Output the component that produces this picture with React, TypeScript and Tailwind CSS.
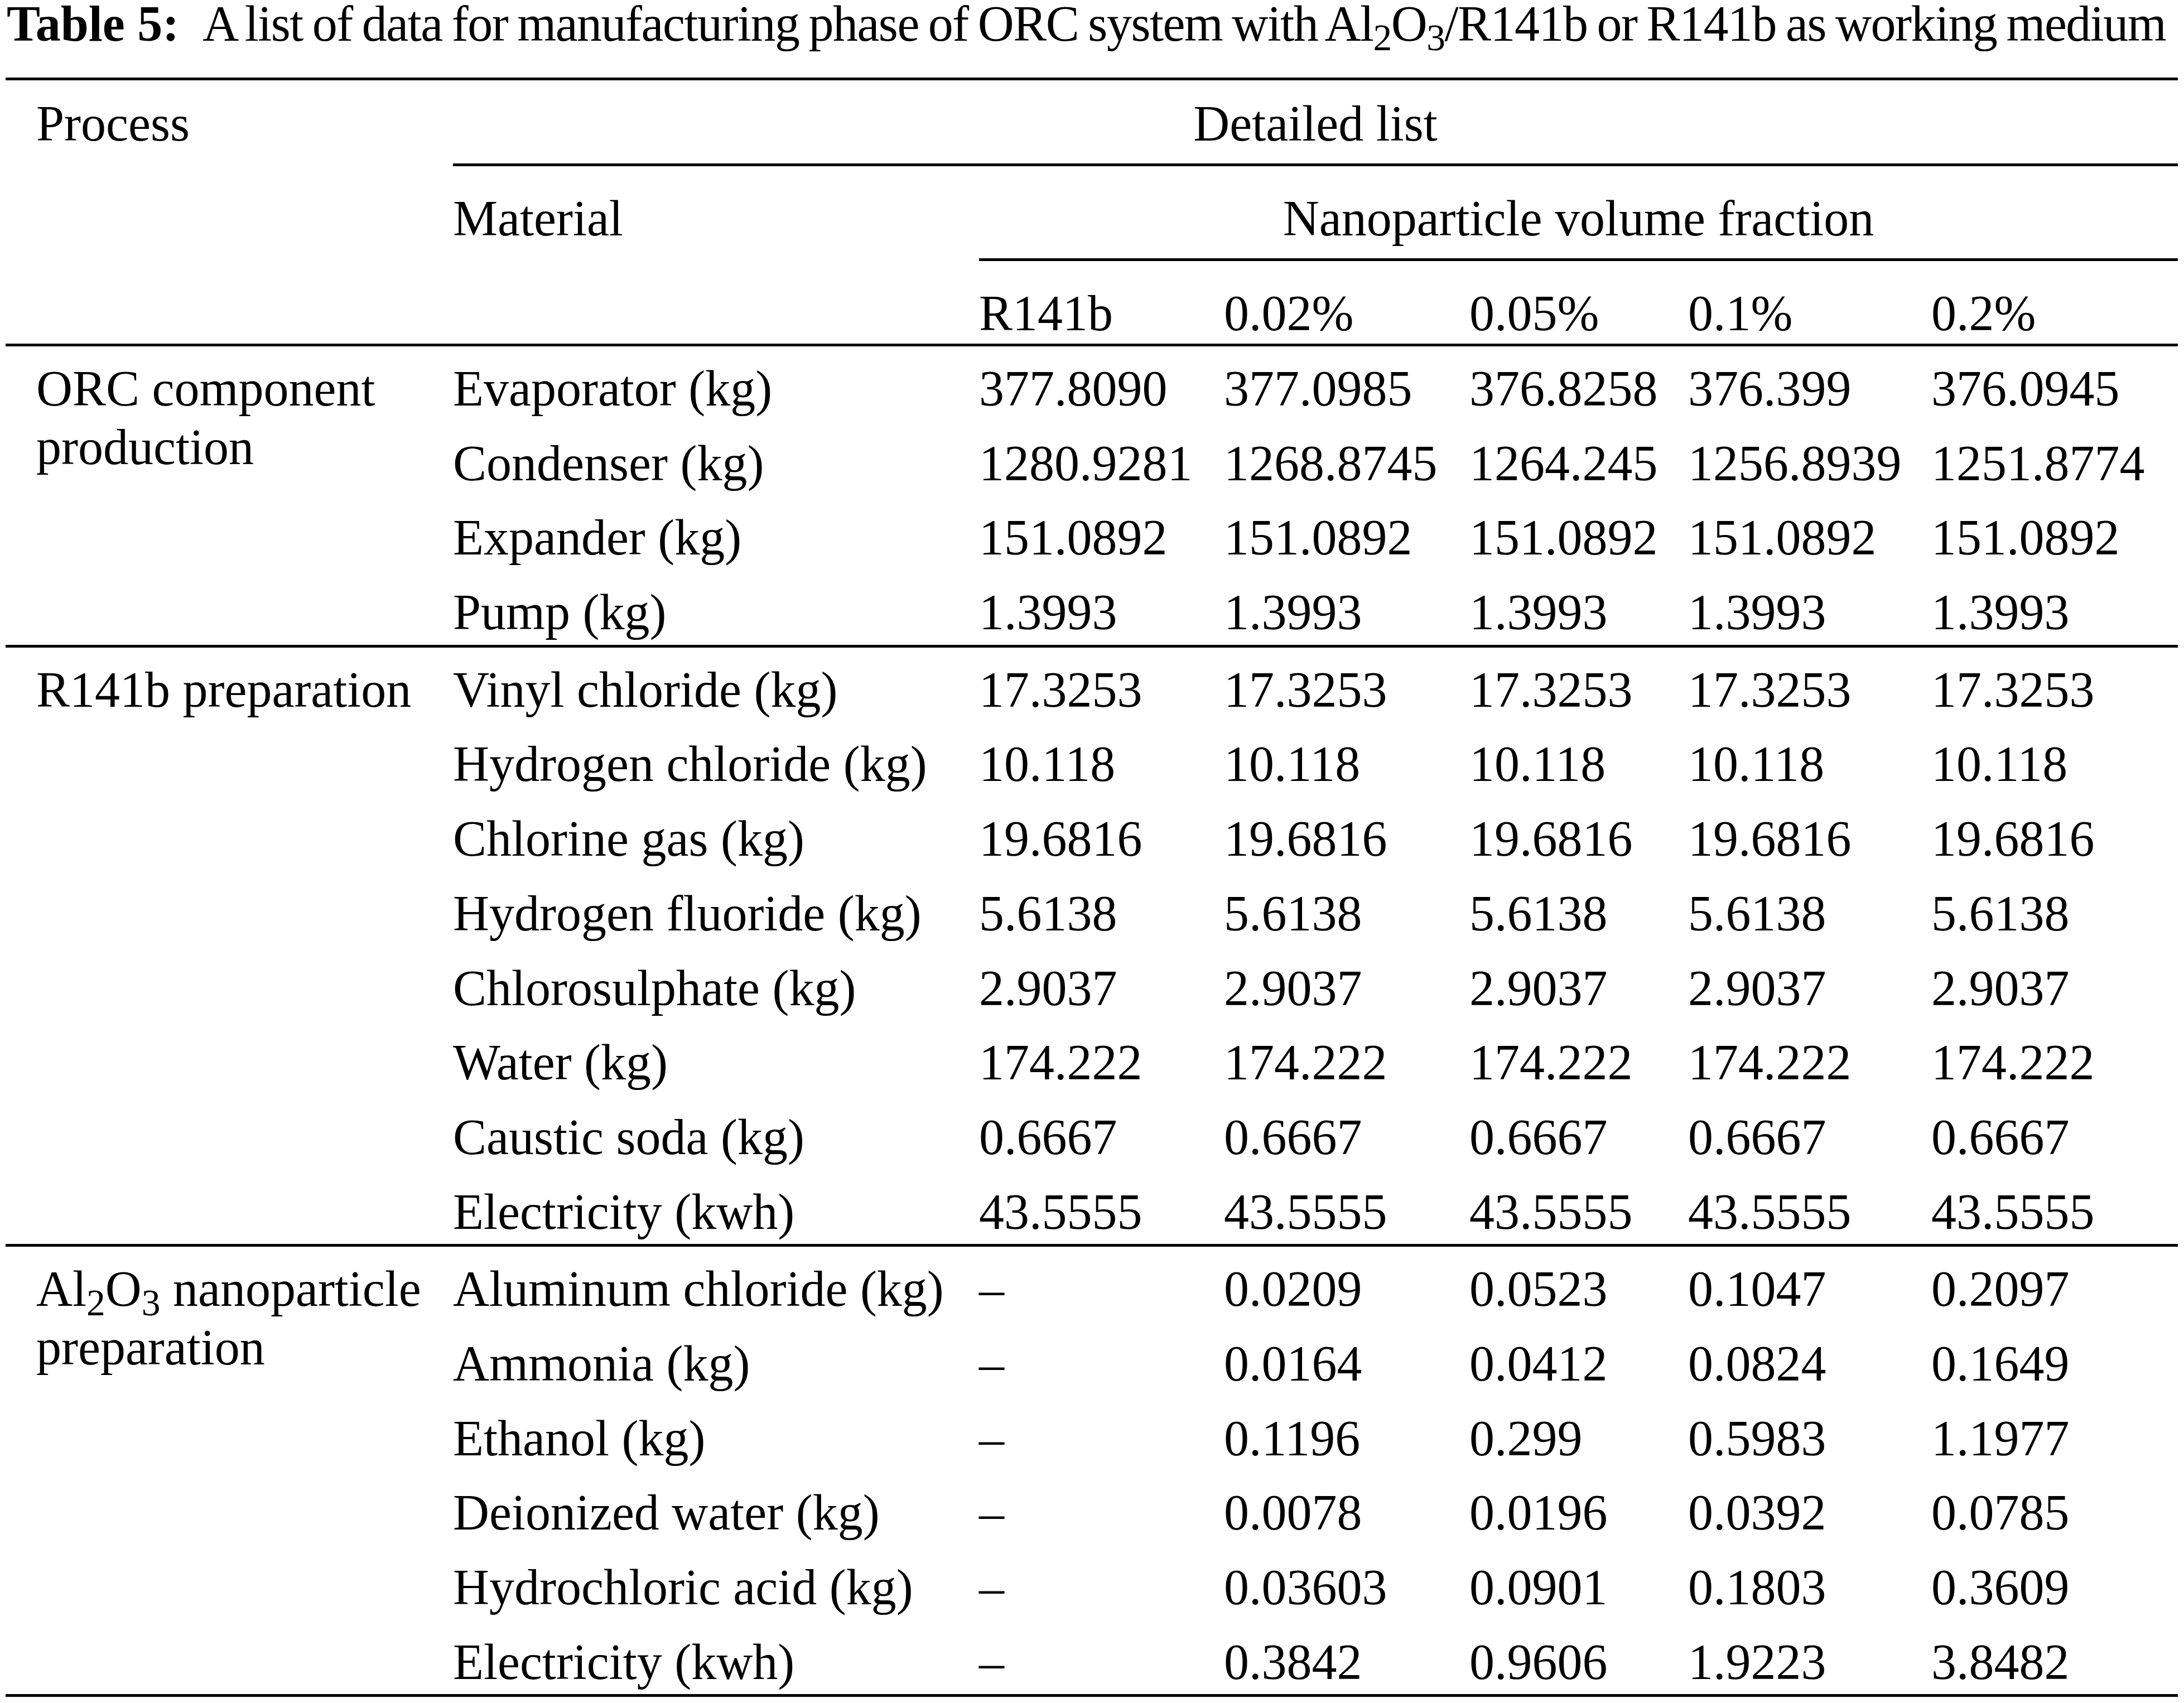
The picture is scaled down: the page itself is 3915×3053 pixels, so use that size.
import React from 'react'

type Row = { material: React.ReactNode; values: string[] }

interface Section {
  process: React.ReactNode
  rows: Row[]
}

const COLS = 'grid grid-cols-[802px_943px_439px_440px_392px_436px_442px]'

const Al2O3 = () => (
  <>
    Al<sub>2</sub>O<sub>3</sub>
  </>
)

const SECTIONS: Section[] = [
  {
    process: (
      <>
        ORC component
        <br />
        production
      </>
    ),
    rows: [
      { material: 'Evaporator (kg)', values: ['377.8090', '377.0985', '376.8258', '376.399', '376.0945'] },
      { material: 'Condenser (kg)', values: ['1280.9281', '1268.8745', '1264.245', '1256.8939', '1251.8774'] },
      { material: 'Expander (kg)', values: ['151.0892', '151.0892', '151.0892', '151.0892', '151.0892'] },
      { material: 'Pump (kg)', values: ['1.3993', '1.3993', '1.3993', '1.3993', '1.3993'] },
    ],
  },
  {
    process: 'R141b preparation',
    rows: [
      { material: 'Vinyl chloride (kg)', values: ['17.3253', '17.3253', '17.3253', '17.3253', '17.3253'] },
      { material: 'Hydrogen chloride (kg)', values: ['10.118', '10.118', '10.118', '10.118', '10.118'] },
      { material: 'Chlorine gas (kg)', values: ['19.6816', '19.6816', '19.6816', '19.6816', '19.6816'] },
      { material: 'Hydrogen fluoride (kg)', values: ['5.6138', '5.6138', '5.6138', '5.6138', '5.6138'] },
      { material: 'Chlorosulphate (kg)', values: ['2.9037', '2.9037', '2.9037', '2.9037', '2.9037'] },
      { material: 'Water (kg)', values: ['174.222', '174.222', '174.222', '174.222', '174.222'] },
      { material: 'Caustic soda (kg)', values: ['0.6667', '0.6667', '0.6667', '0.6667', '0.6667'] },
      { material: 'Electricity (kwh)', values: ['43.5555', '43.5555', '43.5555', '43.5555', '43.5555'] },
    ],
  },
  {
    process: (
      <>
        <Al2O3 /> nanoparticle
        <br />
        preparation
      </>
    ),
    rows: [
      { material: 'Aluminum chloride (kg)', values: ['–', '0.0209', '0.0523', '0.1047', '0.2097'] },
      { material: 'Ammonia (kg)', values: ['–', '0.0164', '0.0412', '0.0824', '0.1649'] },
      { material: 'Ethanol (kg)', values: ['–', '0.1196', '0.299', '0.5983', '1.1977'] },
      { material: 'Deionized water (kg)', values: ['–', '0.0078', '0.0196', '0.0392', '0.0785'] },
      { material: 'Hydrochloric acid (kg)', values: ['–', '0.03603', '0.0901', '0.1803', '0.3609'] },
      { material: 'Electricity (kwh)', values: ['–', '0.3842', '0.9606', '1.9223', '3.8482'] },
    ],
  },
]

const FRACTIONS = ['R141b', '0.02%', '0.05%', '0.1%', '0.2%']

const ROW_SPAN: Record<number, string> = {
  4: 'row-span-4',
  6: 'row-span-6',
  8: 'row-span-8',
}

function Rule() {
  return <div className="h-[5px] bg-black" />
}

function BodySection({ section }: { section: Section }) {
  return (
    <div className={COLS}>
      <div className={`${ROW_SPAN[section.rows.length]} self-start pl-[55px] pt-[23px] leading-[105px] whitespace-nowrap`}>
        {section.process}
      </div>
      {section.rows.map((row, i) => (
        <React.Fragment key={i}>
          <div className="pt-[23px] pb-[5.7px] leading-[105px] whitespace-nowrap">{row.material}</div>
          {row.values.map((v, j) => (
            <div key={j} className="pt-[23px] pb-[5.7px] leading-[105px] whitespace-nowrap">
              {v}
            </div>
          ))}
        </React.Fragment>
      ))}
    </div>
  )
}

export default function App() {
  return (
    <div className="w-[3915px] min-h-[3053px] bg-white text-black font-['Liberation_Serif','Times_New_Roman',serif] text-[90px]">
      {/* caption */}
      <div className="h-[139px] pl-[12px] leading-[86px] whitespace-nowrap">
        <span className="font-bold">Table 5:</span>
        <span className="ml-[42px] tracking-[-1.5px] [word-spacing:-4px]">
          A list of data for manufacturing phase of ORC system with <Al2O3 />/R141b or R141b as working medium
        </span>
      </div>

      <div className="ml-[10px] w-[3894px]">
        <Rule />

        {/* header */}
        <div className={COLS}>
          <div className="row-span-3 self-start pl-[55px] pt-[25px] leading-[105px]">Process</div>
          <div className="col-span-6 border-b-[5px] border-black pt-[25px] pb-[19px] text-center leading-[105px]">
            Detailed list
          </div>
          <div className="row-span-2 self-start pt-[41px] leading-[105px]">Material</div>
          <div className="col-span-5 border-b-[5px] border-black pt-[41px] pb-[19px] text-center leading-[105px]">
            Nanoparticle volume fraction
          </div>
          {FRACTIONS.map(f => (
            <div key={f} className="pt-[41px] pb-[2px] leading-[105px]">
              {f}
            </div>
          ))}
        </div>
        <Rule />

        {SECTIONS.map((s, i) => (
          <React.Fragment key={i}>
            <BodySection section={s} />
            <Rule />
          </React.Fragment>
        ))}
      </div>
    </div>
  )
}
